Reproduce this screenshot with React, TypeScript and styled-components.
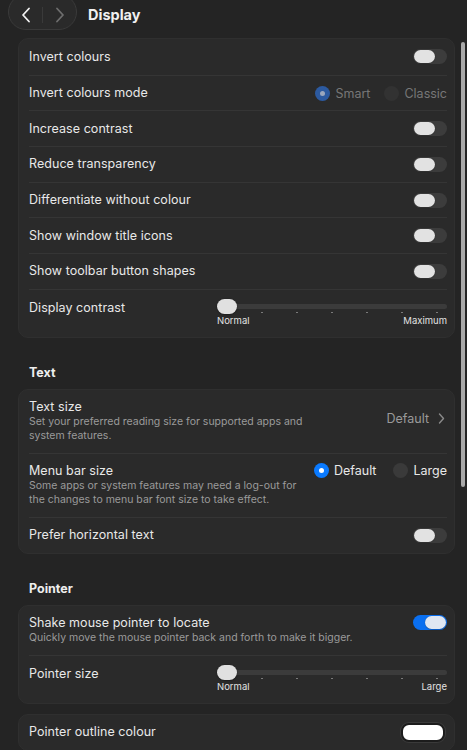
import React from 'react'
import styled, { createGlobalStyle } from 'styled-components'

const GlobalStyle = createGlobalStyle`
    html, body {
        margin: 0;
        padding: 0;
        background: #242424;
    }
    body {
        font-family: Inter, "Noto Sans", "Liberation Sans", sans-serif;
        -webkit-font-smoothing: antialiased;
    }
`

type ToggleProps = { on?: boolean }

const Toggle: React.FC<ToggleProps> = ({ on }) => (
    <Track $on={on}>
        <Knob $on={on} />
    </Track>
)

type SliderProps = { min: string; max: string }

const Slider: React.FC<SliderProps> = ({ min, max }) => (
    <SliderBox>
        <SliderRail>
            <SliderKnob />
        </SliderRail>
        <Ticks>
            {Array.from({ length: 7 }).map((_, i) => <Tick key={i} />)}
        </Ticks>
        <SliderLabels>
            <span>{min}</span>
            <span>{max}</span>
        </SliderLabels>
    </SliderBox>
)

type RadioProps = { label: string; checked?: boolean; disabled?: boolean }

const Radio: React.FC<RadioProps> = ({ label, checked, disabled }) => (
    <RadioItem $disabled={disabled}>
        <RadioDot $checked={checked} $disabled={disabled} />
        {label}
    </RadioItem>
)

const simpleRows = [
    'Increase contrast',
    'Reduce transparency',
    'Differentiate without colour',
    'Show window title icons',
    'Show toolbar button shapes',
]

const App: React.FC = () => {
    return (
        <Page>
            <GlobalStyle />
            <Header>
                <NavPill>
                    <NavButton>
                        <svg width="10" height="16" viewBox="0 0 10 16">
                            <path d="M8 1.5 L2 8 L8 14.5" fill="none" stroke="#f2f2f2" strokeWidth="1.8" strokeLinecap="round" strokeLinejoin="round" />
                        </svg>
                    </NavButton>
                    <NavDivider />
                    <NavButton>
                        <svg width="10" height="16" viewBox="0 0 10 16">
                            <path d="M2 1.5 L8 8 L2 14.5" fill="none" stroke="#6e6e6e" strokeWidth="1.8" strokeLinecap="round" strokeLinejoin="round" />
                        </svg>
                    </NavButton>
                </NavPill>
                <Title>Display</Title>
            </Header>

            <Content>
                <Card>
                    <Row>
                        <Label>Invert colours</Label>
                        <Toggle />
                    </Row>
                    <Row>
                        <Label>Invert colours mode</Label>
                        <RadioGroup>
                            <Radio label="Smart" checked disabled />
                            <Radio label="Classic" disabled />
                        </RadioGroup>
                    </Row>
                    {simpleRows.map(r => (
                        <Row key={r}>
                            <Label>{r}</Label>
                            <Toggle />
                        </Row>
                    ))}
                    <SliderRow>
                        <Label>Display contrast</Label>
                        <Slider min="Normal" max="Maximum" />
                    </SliderRow>
                </Card>

                <SectionTitle>Text</SectionTitle>
                <Card>
                    <TallRow>
                        <TextBlock $max={282}>
                            <Label>Text size</Label>
                            <Desc>Set your preferred reading size for supported apps and system features.</Desc>
                        </TextBlock>
                        <ValueLink>
                            Default
                            <svg width="7" height="11" viewBox="0 0 7 11">
                                <path d="M1.5 1 L5.5 5.5 L1.5 10" fill="none" stroke="#8a8a8a" strokeWidth="1.4" strokeLinecap="round" strokeLinejoin="round" />
                            </svg>
                        </ValueLink>
                    </TallRow>
                    <TallRow $top>
                        <TextBlock $max={282}>
                            <Label>Menu bar size</Label>
                            <Desc>Some apps or system features may need a log-out for the changes to menu bar font size to take effect.</Desc>
                        </TextBlock>
                        <RadioGroup $wide>
                            <Radio label="Default" checked />
                            <Radio label="Large" />
                        </RadioGroup>
                    </TallRow>
                    <Row>
                        <Label>Prefer horizontal text</Label>
                        <Toggle />
                    </Row>
                </Card>

                <SectionTitle>Pointer</SectionTitle>
                <Card>
                    <TallRow $top>
                        <TextBlock $max={370}>
                            <Label>Shake mouse pointer to locate</Label>
                            <Desc>Quickly move the mouse pointer back and forth to make it bigger.</Desc>
                        </TextBlock>
                        <Toggle on />
                    </TallRow>
                    <SliderRow>
                        <Label>Pointer size</Label>
                        <Slider min="Normal" max="Large" />
                    </SliderRow>
                </Card>

                <Card $gap>
                    <Row>
                        <Label>Pointer outline colour</Label>
                        <ColourWell />
                    </Row>
                </Card>
            </Content>
            <ScrollThumb />
        </Page>
    )
}

const Page = styled.div`
    position: relative;
    width: 467px;
    height: 750px;
    overflow: hidden;
    background: #242424;
    color: #e6e6e6;
`

const Header = styled.div`
    height: 31px;
    display: flex;
    align-items: center;
    padding-left: 8px;
    gap: 11px;
`

const NavPill = styled.div`
    width: 69px;
    height: 36px;
    margin-top: -7px;
    box-sizing: border-box;
    border: 1px solid #3a3a3a;
    border-radius: 18px;
    background: #2a2a2a;
    display: flex;
    align-items: center;
    padding-top: 6px;
`

const NavButton = styled.div`
    flex: 1;
    display: flex;
    align-items: center;
    justify-content: center;
`

const NavDivider = styled.div`
    width: 1px;
    height: 16px;
    background: #3a3a3a;
`

const Title = styled.div`
    font-size: 14.5px;
    font-weight: 700;
    color: #f0f0f0;
    margin-top: -2px;
`

const Content = styled.div`
    padding: 7px 12px 0 18px;
`

const Card = styled.div<{ $gap?: boolean }>`
    background: #2a2a2a;
    border: 1px solid #2f2f2f;
    border-radius: 10px;
    padding: 0 7px 0 10px;
    margin-top: ${p => (p.$gap ? '10px' : '0')};
`

const Row = styled.div`
    height: 35.7px;
    box-sizing: border-box;
    display: flex;
    align-items: center;
    justify-content: space-between;
    border-top: 1px solid #353535;
    &:first-child {
        border-top: none;
    }
`

const TallRow = styled.div<{ $top?: boolean }>`
    display: flex;
    align-items: ${p => (p.$top ? 'flex-start' : 'center')};
    justify-content: space-between;
    padding: 9px 0 10px;
    border-top: 1px solid #353535;
    &:first-child {
        border-top: none;
    }
`

const SliderRow = styled.div`
    height: 48px;
    box-sizing: border-box;
    display: flex;
    align-items: flex-start;
    justify-content: space-between;
    padding-top: 10px;
    border-top: 1px solid #353535;
`

const Label = styled.div`
    font-size: 12.5px;
    line-height: 16px;
    color: #e8e8e8;
    letter-spacing: 0.05px;
`

const TextBlock = styled.div<{ $max: number }>`
    display: flex;
    flex-direction: column;
    max-width: ${p => p.$max}px;
`

const Desc = styled.div`
    font-size: 10.5px;
    line-height: 14px;
    color: #9b9b9b;
`

const SectionTitle = styled.div`
    font-size: 12.5px;
    font-weight: 700;
    line-height: 16px;
    color: #eeeeee;
    padding-left: 11px;
    margin: 27px 0 8px;
`

const Track = styled.div<{ $on?: boolean }>`
    width: 34px;
    height: 15px;
    border-radius: 8px;
    background: ${p => (p.$on ? '#0a6ff0' : '#3c3c3c')};
    display: flex;
    justify-content: ${p => (p.$on ? 'flex-end' : 'flex-start')};
    align-items: center;
    padding: 0 1px;
    box-sizing: border-box;
    flex-shrink: 0;
`

const Knob = styled.div<{ $on?: boolean }>`
    width: 21px;
    height: 13px;
    border-radius: 7px;
    background: ${p => (p.$on ? '#dfe6f2' : '#e2e2e2')};
    box-shadow: 0 0.5px 1px rgba(0, 0, 0, 0.4);
`

const RadioGroup = styled.div<{ $wide?: boolean }>`
    display: flex;
    align-items: center;
    gap: ${p => (p.$wide ? '17px' : '14px')};
`

const RadioItem = styled.div<{ $disabled?: boolean }>`
    display: flex;
    align-items: center;
    gap: 5px;
    font-size: 12.5px;
    color: ${p => (p.$disabled ? '#777777' : '#e8e8e8')};
`

const RadioDot = styled.div<{ $checked?: boolean; $disabled?: boolean }>`
    width: 15px;
    height: 15px;
    border-radius: 50%;
    box-sizing: border-box;
    background: ${p => (p.$checked ? (p.$disabled ? '#2c5aa0' : '#0a7aff') : p.$disabled ? '#323232' : '#3a3a3a')};
    display: flex;
    align-items: center;
    justify-content: center;
    &::after {
        content: "";
        display: ${p => (p.$checked ? 'block' : 'none')};
        width: 5px;
        height: 5px;
        border-radius: 50%;
        background: ${p => (p.$disabled ? '#9aa7bd' : '#ffffff')};
    }
`

const ValueLink = styled.div`
    display: flex;
    align-items: center;
    gap: 9px;
    font-size: 12.5px;
    color: #9a9a9a;
    margin-top: -4px;
    padding-right: 2px;
`

const SliderBox = styled.div`
    width: 230px;
    display: flex;
    flex-direction: column;
`

const SliderRail = styled.div`
    position: relative;
    height: 5px;
    margin-top: 4px;
    border-radius: 3px;
    background: #3b3b3b;
`

const SliderKnob = styled.div`
    position: absolute;
    left: 0;
    top: -5px;
    width: 20px;
    height: 15px;
    border-radius: 8px;
    background: #e0e0e0;
    box-shadow: 0 0.5px 1.5px rgba(0, 0, 0, 0.5);
`

const Ticks = styled.div`
    display: flex;
    justify-content: space-between;
    padding: 0 9px 0 9px;
    margin-top: 3px;
    height: 2px;
`

const Tick = styled.div`
    width: 1.5px;
    height: 1.5px;
    background: #7a7a7a;
`

const SliderLabels = styled.div`
    display: flex;
    justify-content: space-between;
    font-size: 9.5px;
    line-height: 12px;
    margin-top: 1px;
    color: #e2e2e2;
`

const ColourWell = styled.div`
    width: 40px;
    height: 15px;
    border-radius: 8px;
    background: #ffffff;
    border: 2px solid #1c1c1c;
    box-shadow: 0 0 0 1px #3a3a3a;
    margin-right: 2px;
`

const ScrollThumb = styled.div`
    position: absolute;
    right: 2px;
    top: 42px;
    width: 4px;
    height: 445px;
    border-radius: 2px;
    background: #a9a9a9;
`

export default App
